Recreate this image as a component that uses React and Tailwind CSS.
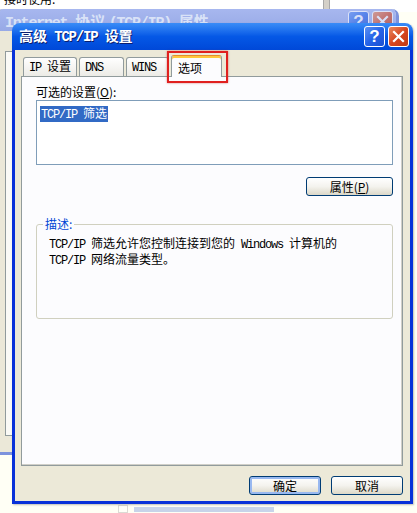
import React from "react";

const M = ({ children }) => (
  <span className="whitespace-pre font-['Liberation_Mono',monospace] tracking-[-1.2px]">{children}</span>
);

const XpButton = ({ children, className = "" }) => (
  <button
    type="button"
    className={`h-[19px] rounded-[3px] border border-[#003c74] bg-gradient-to-b from-[#ffffff] via-[#f4f3ee] to-[#dcd8c8] text-[12px] leading-none text-black ${className}`}
  >
    {children}
  </button>
);

const Tab = ({ children, active }) =>
  active ? (
    <div className="relative z-10 -mb-px flex h-[22px] w-[51px] items-start justify-start rounded-t-[3px] border border-b-0 border-[#919b9c] border-t-[#e68b2c] bg-[#fcfcfe] px-[6px] pt-[3px] shadow-[inset_0_2px_0_#ffc83c]">
      {children}
    </div>
  ) : (
    <div className="mt-[2px] flex h-[19px] items-center whitespace-nowrap rounded-t-[3px] border border-b-0 border-[#919b9c] bg-gradient-to-b from-[#ffffff] to-[#ecebe6] px-[5px]">
      {children}
    </div>
  );

const TitleButton = ({ kind }) => (
  <div
    className={`flex h-[21px] w-[21px] items-center justify-center rounded-[3px] border border-white ${
      kind === "close"
        ? "bg-gradient-to-br from-[#e8875c] via-[#d6461f] to-[#c03a14]"
        : "bg-gradient-to-br from-[#5c8ff2] via-[#2563e8] to-[#1c4fd0]"
    }`}
  >
    {kind === "close" ? (
      <svg width="13" height="13" viewBox="0 0 13 13">
        <path d="M2 2 L11 11 M11 2 L2 11" stroke="white" strokeWidth="2.2" strokeLinecap="square" />
      </svg>
    ) : (
      <span className="font-['Liberation_Sans',sans-serif] text-[17px] font-bold leading-none text-white">?</span>
    )}
  </div>
);

export default function App() {
  return (
    <div className="relative h-[513px] w-[417px] overflow-hidden bg-[#fffff5] font-['Noto_Sans_CJK_SC',sans-serif] text-[12px] text-black">
      {/* window far behind */}
      <div className="absolute left-0 top-0 flex h-[12px] w-[417px] bg-white">
        <div className="-mt-[8px] pl-[4px] text-[12px] leading-[13px]">接时使用.</div>
        <div className="absolute left-[323px] top-0 h-[12px] w-[7px] border-x border-[#a8a8a8] bg-[#d4d0c8]" />
      </div>

      {/* background dialog (inactive) */}
      <div className="absolute left-[-4px] top-[9px] flex h-[446px] w-[403px] flex-col overflow-hidden rounded-t-[7px] border-x-[3px] border-b-[3px] border-[#7d93dd] bg-[#ebe8d8]">
        <div className="flex h-[22px] shrink-0 items-start justify-between bg-gradient-to-b from-[#a7b7ef] to-[#97a9e6] pl-[6px] pr-[3px]">
          <span className="mt-[3px] text-[15px] font-bold leading-[18px] text-[#d9e2f7]">
            <M>Internet </M>协议 <M>(TCP/IP) </M>属性
          </span>
          <div className="mt-[2px] flex gap-[3px] opacity-60">
            <TitleButton kind="help" />
            <TitleButton kind="close" />
          </div>
        </div>
        <div className="flex-1 px-[6px] pt-[20px]">
          <div className="h-[385px] border border-[#919b9c] bg-[#fafaf6]" />
        </div>
      </div>

      {/* front dialog */}
      <div className="absolute left-[12px] top-[23px] flex h-[481px] w-[401px] flex-col overflow-hidden rounded-t-[8px] shadow-[1px_1px_2px_rgba(0,0,0,0.25)]">
        <div className="flex h-[27px] shrink-0 items-center justify-between bg-gradient-to-b from-[#3a8cf7] via-[#0558e6] to-[#0048d8] pl-[7px] pr-[4px]">
          <span className="text-[14px] font-bold text-white [text-shadow:1px_1px_0_#0a1e6e]">
            高级<M> TCP/IP </M>设置
          </span>
          <div className="flex gap-[3px]">
            <TitleButton kind="help" />
            <TitleButton kind="close" />
          </div>
        </div>

        <div className="flex flex-1 flex-col border-x-[3px] border-b-[3px] border-[#0831d9] bg-[#ece9d8] pl-[6px] pr-[7px]">
          {/* tabs */}
          <div className="mt-[5px] flex items-end gap-[2px] pl-[2px]">
            <Tab>
              <span className="w-[42px]">
                <M>IP </M>设置
              </span>
            </Tab>
            <Tab>
              <span className="w-[33px]">
                <M>DNS</M>
              </span>
            </Tab>
            <Tab>
              <span className="w-[31px]">
                <M>WINS</M>
              </span>
            </Tab>
            <div className="relative">
              <Tab active>选项</Tab>
              <div className="pointer-events-none absolute -left-[4px] -top-[4px] h-[32px] w-[61px] border-2 border-[#e0201e] shadow-[0_0_2px_rgba(180,0,0,0.5)]" />
            </div>
          </div>

          {/* panel */}
          <div className="flex h-[390px] flex-col border border-[#919b9c] bg-[#fcfcfe] pl-[14px] pr-[9px] pt-[8px] shadow-[inset_-1px_-1px_0_#d0cfc8]">
            <div className="leading-[13px]">
              可选的设置(<span className="underline">O</span>):
            </div>
            <div className="mt-[2px] h-[65px] border border-[#7f9db9] bg-white p-[3px]">
              <span className="inline-block bg-[#316ac5] px-[1px] leading-[13px] text-white">
                <M>TCP/IP </M>筛选
              </span>
            </div>
            <div className="mt-[12px] flex justify-end">
              <XpButton className="w-[87px]">
                属性(<span className="underline">P</span>)
              </XpButton>
            </div>

            <div className="relative mt-[28px] h-[95px] rounded-[3px] border border-[#d0d0bf] px-[12px] pt-[11px]">
              <span className="absolute -top-[8px] left-[6px] bg-[#fcfcfe] px-[2px] leading-[14px] text-[#0046d5]">
                描述:
              </span>
              <p className="leading-[13px]">
                <M>TCP/IP </M>筛选允许您控制连接到您的<M> Windows </M>计算机的
                <br />
                <M>TCP/IP </M>网络流量类型。
              </p>
            </div>
          </div>

          <div className="mt-[10px] flex justify-end gap-[10px]">
            <XpButton className="w-[72px] shadow-[inset_0_0_0_2px_#98b8f0]">确定</XpButton>
            <XpButton className="w-[72px]">取消</XpButton>
          </div>
        </div>
      </div>

      {/* faint watermark hint below */}
      <div className="absolute left-[118px] top-[505px] flex items-center gap-[6px] opacity-30">
        <div className="h-[8px] w-[10px] border border-[#8a8a8a] bg-white" />
        <div className="h-[5px] w-[140px] bg-[#4a6fd0]" />
      </div>
    </div>
  );
}
